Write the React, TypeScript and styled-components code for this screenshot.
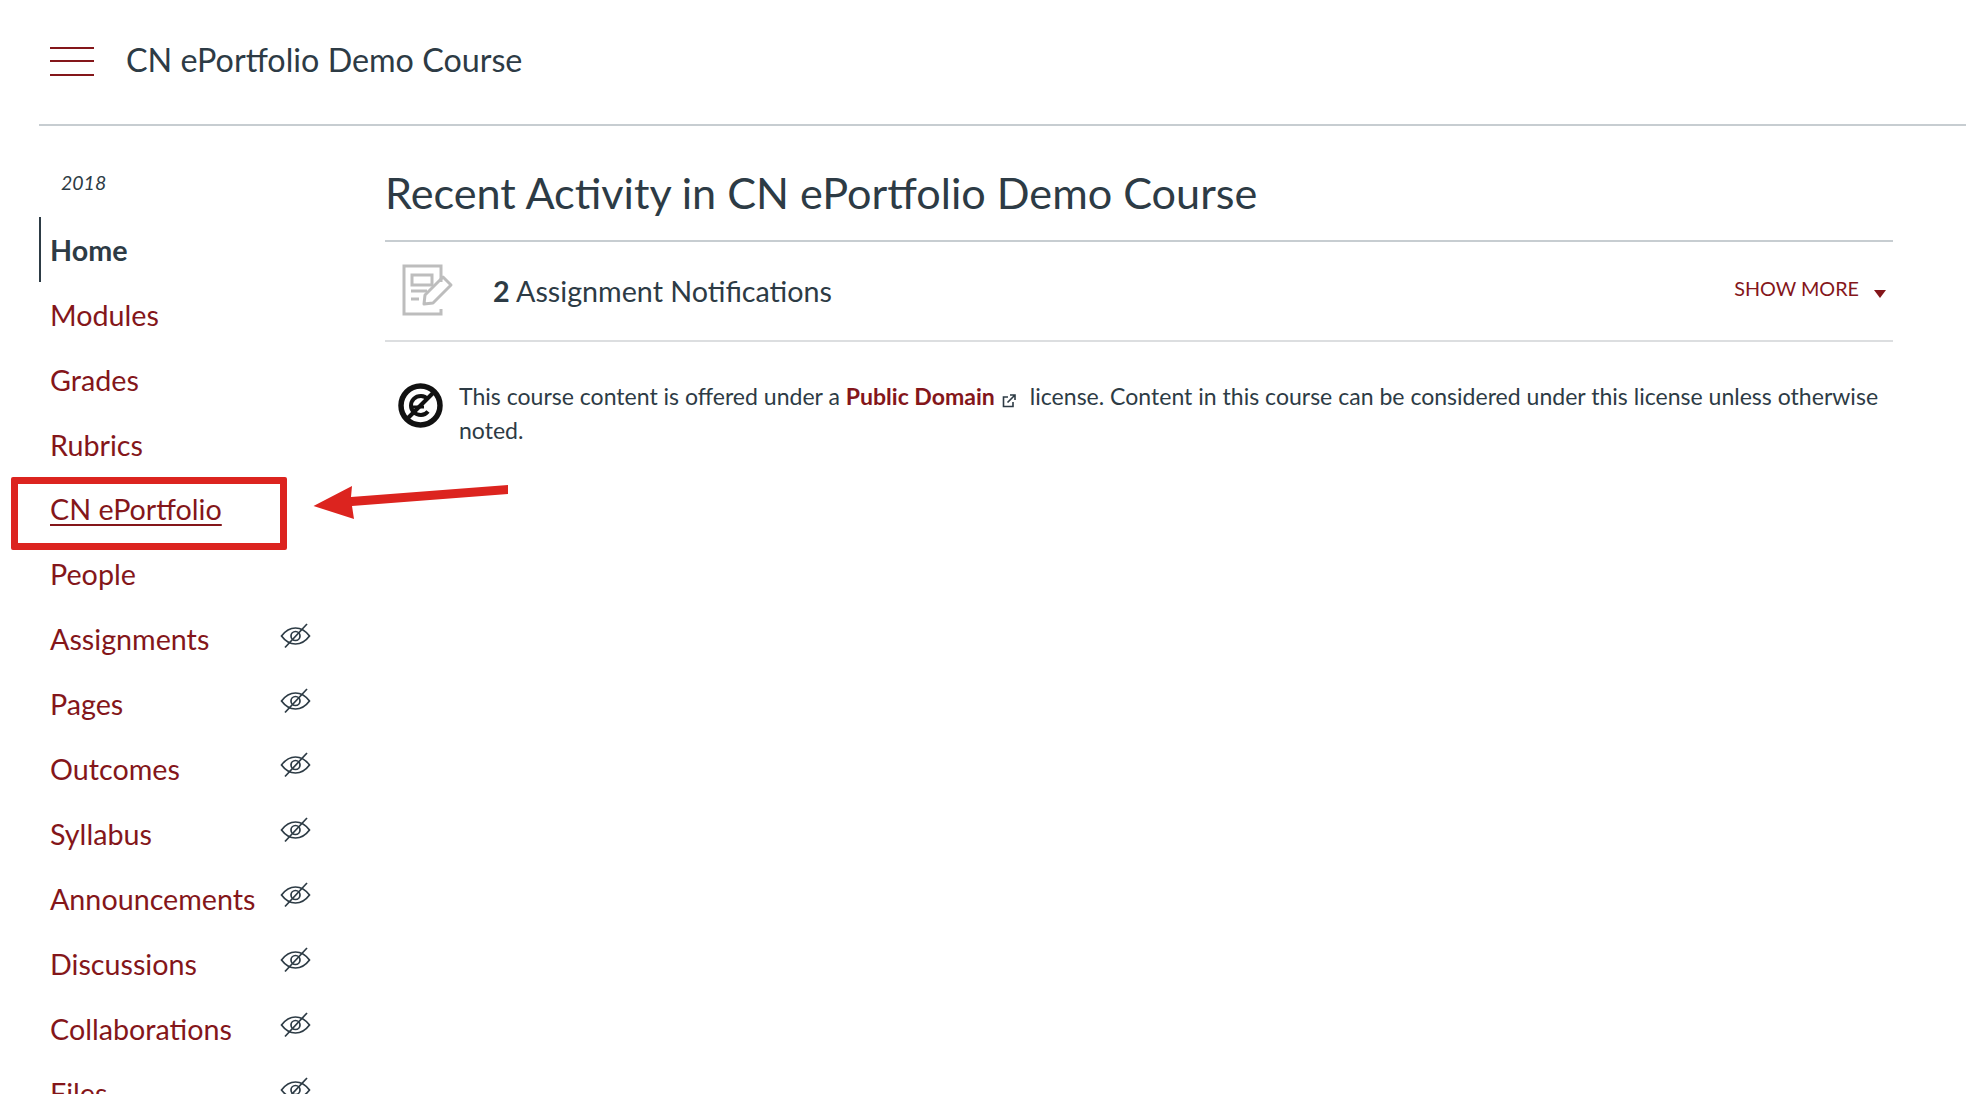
import React, { FunctionComponent } from 'react';
import styled, { createGlobalStyle } from 'styled-components';

const GlobalStyle = createGlobalStyle`
  html, body {
    margin: 0;
    padding: 0;
    background: #fff;
  }
  body {
    font-family: Lato, "Liberation Sans", sans-serif;
    color: #2d3b45;
    text-rendering: optimizeLegibility;
    font-feature-settings: "liga" 1;
  }
  * { box-sizing: border-box; }
`;

const Page = styled.div`
  position: relative;
  width: 1966px;
  height: 1094px;
  overflow: hidden;
`;

const Header = styled.header`
  display: flex;
  align-items: center;
  height: 126px;
  margin-left: 39px;
  padding-left: 11px;
  border-bottom: 2px solid #c7cdd1;
`;

const Burger = styled.div`
  display: flex;
  flex-direction: column;
  justify-content: space-between;
  width: 44px;
  height: 29px;
  margin: -2px 32px 0 0;
  span {
    display: block;
    height: 2px;
    background: #84161a;
  }
`;

const CourseName = styled.div`
  margin-top: -5px;
  font-size: 32.3px;
  line-height: 40px;
`;

const Columns = styled.div`
  display: flex;
`;

const Sidebar = styled.nav`
  width: 385px;
  flex: none;
  padding-left: 39px;
`;

const Term = styled.div`
  height: 91.4px;
  padding: 45px 0 0 22px;
  font-size: 19.5px;
  line-height: 24px;
  font-style: italic;
`;

const NavItem = styled.div<{ $active?: boolean; $current?: boolean }>`
  display: flex;
  align-items: center;
  width: 272px;
  height: 64.9px;
  padding-left: ${(p) => (p.$active ? 9 : 11)}px;
  border-left: ${(p) => (p.$active ? '2px solid #2d3b45' : 'none')};
  font-size: 28.7px;
  font-weight: ${(p) => (p.$active ? 700 : 400)};
  color: ${(p) => (p.$active ? '#2d3b45' : '#84161a')};
  text-decoration: ${(p) => (p.$current ? 'underline' : 'none')};
  text-decoration-thickness: 2px;
  text-underline-offset: 4px;
  span {
    flex: 1;
  }
  svg {
    flex: none;
    margin-top: -7px;
  }
`;

const Main = styled.main`
  width: 1508px;
  flex: none;
`;

const Title = styled.h1`
  margin: 0;
  height: 116px;
  padding-top: 41px;
  border-bottom: 2px solid #c7cdd1;
  font-size: 43.2px;
  line-height: 50px;
  font-weight: 400;
`;

const NotificationRow = styled.div`
  display: flex;
  align-items: center;
  height: 100px;
  padding-left: 17px;
  border-bottom: 2px solid #dcdee0;
  svg {
    margin-top: -3px;
  }
`;

const Count = styled.div`
  flex: 1;
  margin-left: 39px;
  font-size: 28.7px;
  strong {
    font-weight: 700;
  }
`;

const ShowMore = styled.div`
  display: flex;
  align-items: center;
  margin-top: -6px;
  padding-right: 7px;
  font-size: 19.8px;
  color: #84161a;
  i {
    width: 0;
    height: 0;
    margin: 11px 0 0 15px;
    border-left: 6px solid transparent;
    border-right: 6px solid transparent;
    border-top: 8px solid #84161a;
  }
`;

const License = styled.div`
  display: flex;
  padding: 37px 0 0 13px;
  svg.pd {
    flex: none;
    margin: 4px 16px 0 0;
  }
`;

const LicenseText = styled.p`
  margin: 0;
  font-size: 23.05px;
  line-height: 34px;
  b {
    color: #84161a;
    font-weight: 700;
  }
  svg {
    margin: 0 14px -3px 7px;
  }
`;

const RedBox = styled.div`
  position: absolute;
  left: 11px;
  top: 477px;
  width: 276px;
  height: 73px;
  border: 7px solid #dc241f;
  border-radius: 2px;
`;

const Arrow = styled.svg`
  position: absolute;
  left: 310px;
  top: 480px;
`;

const EyeOff: FunctionComponent = () => (
  <svg width="31" height="30" viewBox="0 0 31 30" fill="none" stroke="#2d3b45" strokeWidth="1.7">
    <path d="M1.5 15C6 9 10.5 7 15.5 7s9.5 2 14 8c-4.5 6-9 8-14 8S6 21 1.5 15z" />
    <circle cx="15.5" cy="15" r="4.5" />
    <path d="M5 26.5L27 3" />
  </svg>
);

const NotificationIcon: FunctionComponent = () => (
  <svg width="52" height="52" viewBox="0 0 52 52" fill="none" stroke="#bdbdbd" strokeWidth="3">
    <path d="M39 18V2H2v48h37v-5" />
    <rect x="10" y="11" width="20" height="10" />
    <path d="M9 27h16M9 35h8" />
    <path d="M22 40l1-9 18-18 8 8-18 18z" strokeLinejoin="round" />
  </svg>
);

const PublicDomainIcon: FunctionComponent = () => (
  <svg className="pd" width="45" height="45" viewBox="0 0 45 45" fill="none" stroke="#111">
    <circle cx="22.5" cy="22.5" r="19.5" strokeWidth="5.5" />
    <path d="M30 16.5c-2-2.5-4-3.5-7-3.5-6 0-10 4.5-10 9.5s4 9.5 10 9.5c3 0 5-1 7-3.5" strokeWidth="4" />
    <path d="M9 36L36 9" strokeWidth="4" />
    <path d="M12 24h14" strokeWidth="3" />
  </svg>
);

const ExternalIcon: FunctionComponent = () => (
  <svg width="14" height="14" viewBox="0 0 14 14" fill="none" stroke="#2d3b45" strokeWidth="1.6">
    <path d="M6 3H1.5v9.5H11V8" />
    <path d="M5.5 8.5L12.5 1.5M8 1h5v5" />
  </svg>
);

const navItems = [
  { label: 'Home', active: true },
  { label: 'Modules' },
  { label: 'Grades' },
  { label: 'Rubrics' },
  { label: 'CN ePortfolio', current: true },
  { label: 'People' },
  { label: 'Assignments', hidden: true },
  { label: 'Pages', hidden: true },
  { label: 'Outcomes', hidden: true },
  { label: 'Syllabus', hidden: true },
  { label: 'Announcements', hidden: true },
  { label: 'Discussions', hidden: true },
  { label: 'Collaborations', hidden: true },
  { label: 'Files', hidden: true },
];

const App: FunctionComponent = () => (
  <Page>
    <GlobalStyle />
    <Header>
      <Burger>
        <span />
        <span />
        <span />
      </Burger>
      <CourseName>CN ePortfolio Demo Course</CourseName>
    </Header>
    <Columns>
      <Sidebar>
        <Term>2018</Term>
        {navItems.map((item) => (
          <NavItem key={item.label} $active={item.active} $current={item.current}>
            <span>{item.label}</span>
            {item.hidden && <EyeOff />}
          </NavItem>
        ))}
      </Sidebar>
      <Main>
        <Title>Recent Activity in CN ePortfolio Demo Course</Title>
        <NotificationRow>
          <NotificationIcon />
          <Count>
            <strong>2</strong> Assignment Notifications
          </Count>
          <ShowMore>
            SHOW MORE
            <i />
          </ShowMore>
        </NotificationRow>
        <License>
          <PublicDomainIcon />
          <LicenseText>
            This course content is offered under a <b>Public Domain</b>
            <ExternalIcon />
            license. Content in this course can be considered under this license unless otherwise noted.
          </LicenseText>
        </License>
      </Main>
    </Columns>
    <RedBox />
    <Arrow width="200" height="40" viewBox="0 0 200 40">
      <path d="M3.5 26L42 6l-1 11 157-12v9L42 26l2 13z" fill="#dc241f" />
    </Arrow>
  </Page>
);

export default App;
